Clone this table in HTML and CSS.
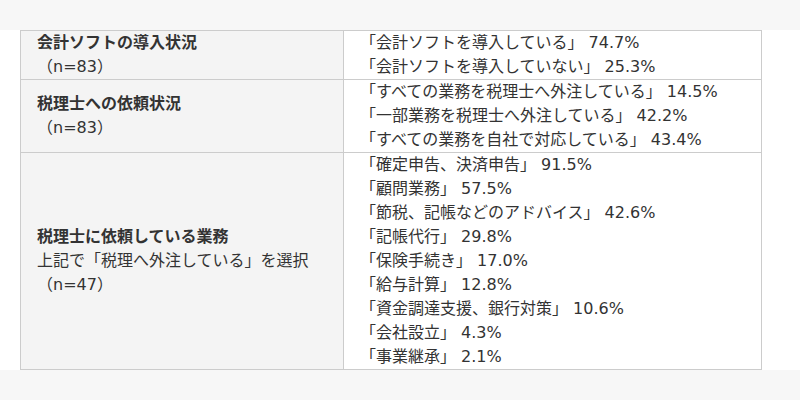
FILE: index.html
```html
<!DOCTYPE html>
<html lang="ja">
<head>
<meta charset="utf-8">
<title>税理士・会計ソフト調査</title>
<link rel="stylesheet" href="styles.css">
</head>
<body>
<section class="panel">
  <table class="survey">
    <colgroup><col class="col-q"><col class="col-a"></colgroup>
    <tbody>
      <tr>
        <th><strong>会計ソフトの導入状況</strong><br>（n=83）</th>
        <td>「会計ソフトを導入している」 74.7%<br>「会計ソフトを導入していない」 25.3%</td>
      </tr>
      <tr>
        <th><strong>税理士への依頼状況</strong><br>（n=83）</th>
        <td>「すべての業務を税理士へ外注している」 14.5%<br>「一部業務を税理士へ外注している」 42.2%<br>「すべての業務を自社で対応している」 43.4%</td>
      </tr>
      <tr>
        <th><strong>税理士に依頼している業務</strong><br>上記で「税理へ外注している」を選択<br>（n=47）</th>
        <td>「確定申告、決済申告」 91.5%<br>「顧問業務」 57.5%<br>「節税、記帳などのアドバイス」 42.6%<br>「記帳代行」 29.8%<br>「保険手続き」 17.0%<br>「給与計算」 12.8%<br>「資金調達支援、銀行対策」 10.6%<br>「会社設立」 4.3%<br>「事業継承」 2.1%</td>
      </tr>
    </tbody>
  </table>
</section>
</body>
</html>
```
FILE: styles.css
```css
html, body {
  margin: 0;
  padding: 0;
  background: #f7f7f7;
}
body {
  padding: 30px 0;
  font-family: "DejaVu Sans", "Noto Sans CJK JP", sans-serif;
  font-size: 16px;
  line-height: 24px;
  color: #333;
}
.panel {
  background: #fff;
  padding: 0 38px 0 20px;
}
.survey {
  width: 742px;
  border-collapse: collapse;
  table-layout: fixed;
}
.col-q { width: 323px; }
.survey th,
.survey td {
  border: 1px solid #ccc;
  padding: 0 16px;
  text-align: left;
  vertical-align: middle;
  font-weight: normal;
}
.survey th {
  background: #f4f4f4;
}
.survey strong {
  font-weight: bold;
}
```
